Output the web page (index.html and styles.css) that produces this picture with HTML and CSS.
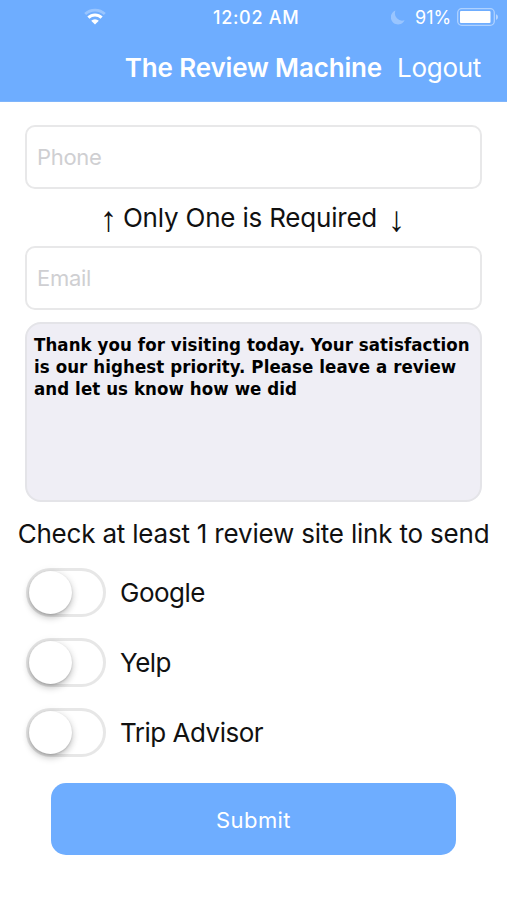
FILE: index.html
```html
<!DOCTYPE html>
<html lang="en">
<head>
    <meta charset="UTF-8">
    <meta name="viewport" content="width=device-width, initial-scale=1.0">
    <title>The Review Machine</title>
    <link rel="stylesheet" href="styles.css">
</head>
<body>
    <header class="header">
        <div class="status-bar">
            <svg class="wifi" width="22" height="18" viewBox="0 0 22 18" fill="none" stroke="#fff">
                <path d="M1.2 6.1a14 14 0 0 1 19.6 0" stroke-width="2.8" opacity="0.3"/>
                <path d="M4.4 9.6a9.4 9.4 0 0 1 13.2 0" stroke-width="3"/>
                <path d="M11 16.5l-3.8-3.8a5.4 5.4 0 0 1 7.6 0z" fill="#fff" stroke="none"/>
            </svg>
            <span class="time">12:02 AM</span>
            <div class="battery-info">
                <svg class="moon" width="14" height="15" viewBox="0 0 14 15">
                    <path d="M4.5 0.5A7.2 7.2 0 1 0 13.6 10.2A7.3 7.3 0 0 1 4.5 0.5z" fill="#fff" opacity="0.3"/>
                </svg>
                <span class="percent">91%</span>
                <svg class="battery" width="42" height="18" viewBox="0 0 42 18">
                    <rect x="0.7" y="0.7" width="36.6" height="16.6" rx="4" fill="none" stroke="#fff" stroke-width="1.3" opacity="0.45"/>
                    <rect x="3" y="3" width="30.5" height="12" rx="1" fill="#fff"/>
                    <path d="M39 6.2c2.6 0.8 2.6 4.8 0 5.6z" fill="#fff" opacity="0.5"/>
                </svg>
            </div>
        </div>
        <div class="nav-bar">
            <h1>The Review Machine</h1>
            <a class="logout">Logout</a>
        </div>
    </header>

    <form class="review-form">
        <input class="field" type="text" placeholder="Phone">
        <p class="hint"><span class="arrow">↑</span><span class="hint-text">Only One is Required</span><span class="arrow">↓</span></p>
        <input class="field" type="text" placeholder="Email">

        <div class="message">Thank you for visiting today. Your satisfaction<br>is our highest priority. Please leave a review<br>and let us know how we did</div>

        <p class="sites-title">Check at least 1 review site link to send</p>

        <!-- Review sites -->
        <div class="sites">
            <label class="site"><span class="switch"><span class="knob"></span></span><span>Google</span></label>
            <label class="site"><span class="switch"><span class="knob"></span></span><span>Yelp</span></label>
            <label class="site"><span class="switch"><span class="knob"></span></span><span>Trip Advisor</span></label>
        </div>

        <button class="submit" type="button">Submit</button>
    </form>
</body>
</html>
```

FILE: styles.css
```css
* {
    box-sizing: border-box;
}

body {
    margin: 0;
    background-color: #fff;
    font-family: Inter, sans-serif;
    color: #111;
}

/* Header */
.header {
    height: 102px;
    background-color: #6eadff;
    color: #fff;
    border-bottom: 1px solid #7fb5fb;
}

.status-bar {
    display: grid;
    grid-template-columns: 84px 129px 1fr auto;
    align-items: center;
    height: 34px;
    padding-right: 8px;
}

.wifi {
    grid-column: 2;
}

.time {
    font-size: 18px;
    font-weight: 500;
    letter-spacing: 0.7px;
}

.battery-info {
    display: flex;
    align-items: center;
}

.moon {
    margin-right: 10px;
}

.percent {
    width: 42px;
    font-size: 18px;
    letter-spacing: 0;
}

.nav-bar {
    display: flex;
    justify-content: flex-end;
    align-items: center;
    gap: 15px;
    height: 66px;
    padding-right: 26px;
}

h1 {
    margin: 0;
    font-size: 26px;
    font-weight: 600;
    letter-spacing: -0.15px;
}

.logout {
    font-size: 26px;
    letter-spacing: -0.3px;
}

/* Form */
.review-form {
    padding: 23px 25px 0;
}

.field {
    display: block;
    width: 457px;
    height: 64px;
    padding: 0 10px;
    border: 2px solid #e8e8e9;
    border-radius: 10px;
    font-family: inherit;
    font-size: 22px;
    letter-spacing: -0.3px;
}

.field::placeholder {
    color: #cfcfd2;
}

.hint {
    display: flex;
    align-items: center;
    justify-content: center;
    height: 57px;
    margin: 0;
    font-size: 26px;
}

.arrow {
    padding-top: 2px;
    font-family: "Liberation Sans", sans-serif;
    font-size: 35px;
    line-height: 40px;
    text-align: center;
}

.arrow:first-child {
    width: 29px;
}

.arrow:last-child {
    width: 39px;
    margin-right: -3px;
}

.hint-text {
    letter-spacing: -0.2px;
}

.message {
    height: 180px;
    margin-top: 12px;
    padding: 10px 7px;
    background-color: #efeef5;
    border: 2px solid #e4e4e8;
    border-radius: 16px;
    font-family: "DejaVu Sans Condensed", "DejaVu Sans", sans-serif;
    font-stretch: condensed;
    font-size: 18.5px;
    font-weight: bold;
    line-height: 22px;
    letter-spacing: 0.08px;
    color: #000;
    white-space: nowrap;
}

.sites-title {
    margin: -1px -20px 1px;
    font-size: 26px;
    line-height: 66px;
    text-align: center;
    white-space: nowrap;
    letter-spacing: -0.2px;
}

.sites {
    display: flex;
    flex-direction: column;
    gap: 21px;
}

.site {
    display: flex;
    align-items: center;
    gap: 14px;
    height: 49px;
    font-size: 26px;
    letter-spacing: -0.5px;
}

/* Switch */
.switch {
    width: 80px;
    height: 49px;
    border: 3px solid #e7e7e7;
    border-radius: 25px;
    margin-left: 1px;
}

.knob {
    display: block;
    width: 43px;
    height: 43px;
    border-radius: 50%;
    background-color: #fff;
    box-shadow: 0 4px 7px rgba(0, 0, 0, 0.2), 0 0 8px rgba(0, 0, 0, 0.08), 0 1px 2px rgba(0, 0, 0, 0.15);
}

.submit {
    display: block;
    width: 405px;
    height: 72px;
    margin: 26px auto 0;
    padding-top: 3px;
    background-color: #6eadff;
    border: none;
    border-radius: 15px;
    color: #fff;
    font-family: inherit;
    font-size: 22px;
    letter-spacing: 0.4px;
}
```
